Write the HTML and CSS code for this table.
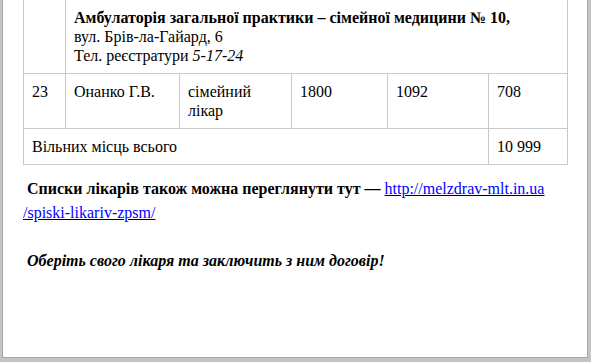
FILE: index.html
```html
<!DOCTYPE html>
<html lang="uk">
<head>
<meta charset="utf-8">
<title>Список лікарів</title>
<link rel="stylesheet" href="styles.css">
</head>
<body>
<div class="page">
  <table class="doctors">
    <colgroup>
      <col class="c1"><col class="c2"><col class="c3"><col class="c4"><col class="c5"><col class="c6">
    </colgroup>
    <tr class="first">
      <td></td>
      <td colspan="5">
        <b>Амбулаторія загальної практики – сімейної медицини № 10,</b><br>
        вул. Брів-ла-Гайард, 6<br>
        Тел. реєстратури <i>5-17-24</i>
      </td>
    </tr>
    <tr>
      <td>23</td>
      <td>Онанко Г.В.</td>
      <td>сімейний лікар</td>
      <td>1800</td>
      <td>1092</td>
      <td>708</td>
    </tr>
    <tr>
      <td colspan="5">Вільних місць всього</td>
      <td>10 999</td>
    </tr>
  </table>
  <p class="note"><b>Списки лікарів також можна переглянути тут — </b><a class="link" href="#">http://melzdrav-mlt.in.ua<wbr>/spiski-likariv-zpsm/</a></p>
  <p class="call"><b><i>Оберіть свого лікаря та заключить з ним договір!</i></b></p>
</div>
</body>
</html>
```
FILE: styles.css
```css
html, body {
  margin: 0;
  padding: 0;
}
body {
  background: #c4c4c4;
  font-family: "Liberation Serif", "Times New Roman", serif;
  font-size: 16px;
  color: #000;
  overflow: hidden;
}
.page {
  box-sizing: border-box;
  height: 358px;
  margin: 0 3px 0 2px;
  background: #fff;
  border: 1px solid #a6a6a6;
  border-top: 0;
  padding: 0 0 0 20px;
}
.doctors {
  border-collapse: collapse;
  table-layout: fixed;
  width: 545px;
}
.c1 { width: 42px; }
.c2 { width: 114px; }
.c3 { width: 112px; }
.c4 { width: 96px; }
.c5 { width: 101px; }
.c6 { width: 79px; }
.doctors td {
  border: 1px solid #c9c9c9;
  padding: 8px;
  line-height: 19px;
  vertical-align: top;
}
.doctors .first td {
  border-top: 0;
}
.note {
  margin: 12px 0 0;
  line-height: 24px;
  text-indent: 4px;
}
.link {
  color: #0000ff;
  text-decoration: underline;
  text-decoration-color: #000;
}
.call {
  margin: 24px 0 0;
  line-height: 24px;
  text-indent: 4px;
}
```
